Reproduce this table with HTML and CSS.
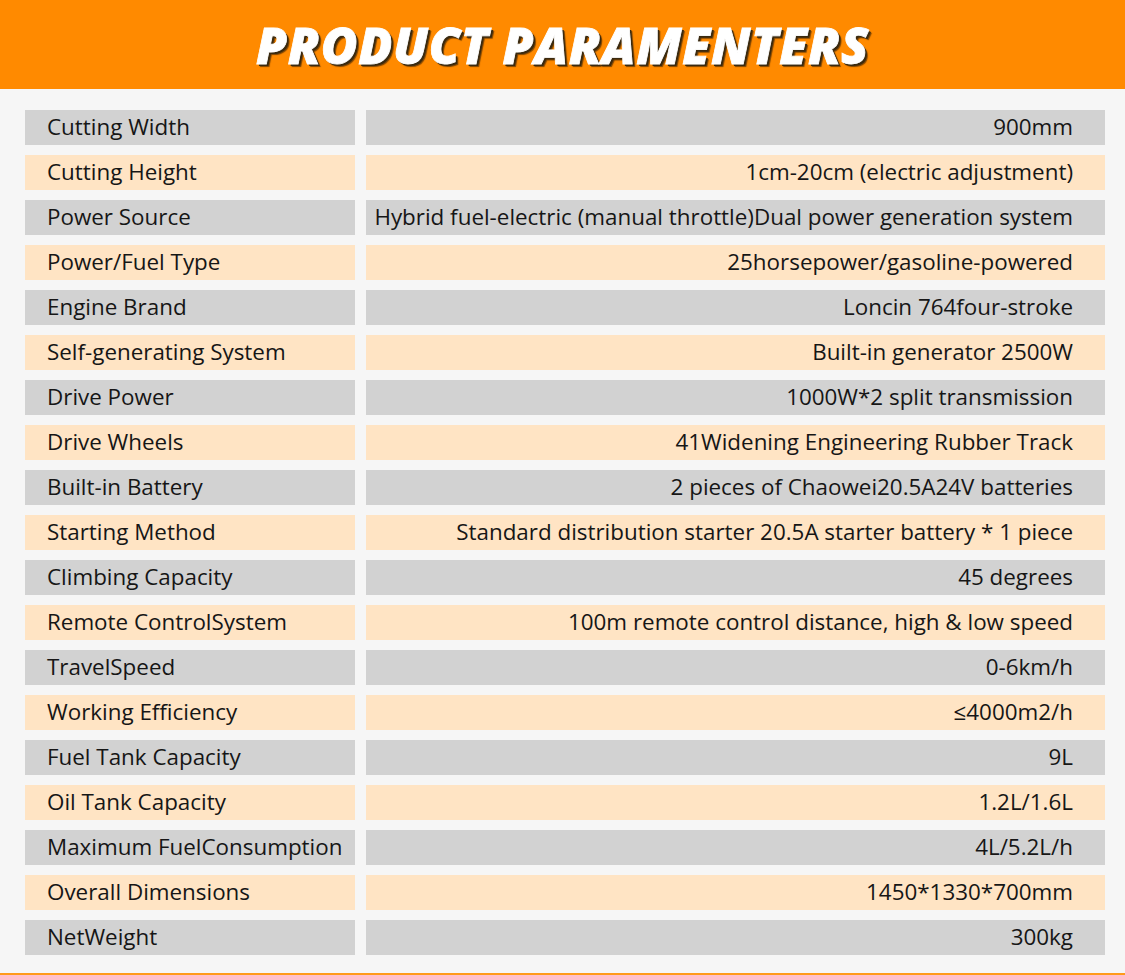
FILE: index.html
```html
<!DOCTYPE html>
<html>
<head>
<meta charset="utf-8">
<link rel="stylesheet" href="styles.css">
</head>
<body>
<header class="banner"><h1 class="title">PRODUCT PARAMENTERS</h1></header>
<main class="table">
  <div class="row gray"><div class="label">Cutting Width</div><div class="value">900mm</div></div>
  <div class="row peach"><div class="label">Cutting Height</div><div class="value">1cm-20cm (electric adjustment)</div></div>
  <div class="row gray"><div class="label">Power Source</div><div class="value">Hybrid fuel-electric (manual throttle)Dual power generation system</div></div>
  <div class="row peach"><div class="label">Power/Fuel Type</div><div class="value">25horsepower/gasoline-powered</div></div>
  <div class="row gray"><div class="label">Engine Brand</div><div class="value">Loncin 764four-stroke</div></div>
  <div class="row peach"><div class="label">Self-generating System</div><div class="value">Built-in generator 2500W</div></div>
  <div class="row gray"><div class="label">Drive Power</div><div class="value">1000W*2 split transmission</div></div>
  <div class="row peach"><div class="label">Drive Wheels</div><div class="value">41Widening Engineering Rubber Track</div></div>
  <div class="row gray"><div class="label">Built-in Battery</div><div class="value">2 pieces of Chaowei20.5A24V batteries</div></div>
  <div class="row peach"><div class="label">Starting Method</div><div class="value">Standard distribution starter 20.5A starter battery * 1 piece</div></div>
  <div class="row gray"><div class="label">Climbing Capacity</div><div class="value">45 degrees</div></div>
  <div class="row peach"><div class="label">Remote ControlSystem</div><div class="value">100m remote control distance, high &amp; low speed</div></div>
  <div class="row gray"><div class="label">TravelSpeed</div><div class="value">0-6km/h</div></div>
  <div class="row peach"><div class="label">Working Efficiency</div><div class="value">≤4000m2/h</div></div>
  <div class="row gray"><div class="label">Fuel Tank Capacity</div><div class="value">9L</div></div>
  <div class="row peach"><div class="label">Oil Tank Capacity</div><div class="value">1.2L/1.6L</div></div>
  <div class="row gray"><div class="label">Maximum FuelConsumption</div><div class="value">4L/5.2L/h</div></div>
  <div class="row peach"><div class="label">Overall Dimensions</div><div class="value">1450*1330*700mm</div></div>
  <div class="row gray"><div class="label">NetWeight</div><div class="value">300kg</div></div>
</main>
<div class="bottom-line"></div>
</body>
</html>
```
FILE: styles.css
```css
html, body {
  margin: 0;
  padding: 0;
}
body {
  width: 1125px;
  height: 975px;
  background: #f6f6f6;
  font-family: "Open Sans", "Noto Sans", sans-serif;
  color: #161616;
  overflow: hidden;
  display: flex;
  flex-direction: column;
}
.banner {
  height: 89px;
  background: #ff8a00;
  display: flex;
  align-items: center;
  justify-content: center;
}
.title {
  margin: 0;
  color: #ffffff;
  font-family: "Open Sans", sans-serif;
  font-weight: 800;
  font-style: italic;
  font-size: 50px;
  letter-spacing: 0.6px;
  text-shadow: 2px 2px 0 #3a2a10, 3px 3px 1px rgba(0,0,0,0.5);
  -webkit-text-stroke: 0.8px #ffffff;
}
.table {
  flex: 1;
  display: flex;
  flex-direction: column;
  gap: 10px;
  padding: 21px 20px 0 25px;
}
.row {
  display: grid;
  grid-template-columns: 330px 739px;
  column-gap: 11px;
  height: 35px;
}
.label, .value {
  display: flex;
  align-items: center;
  font-size: 22.4px;
  white-space: nowrap;
  padding-bottom: 2px;
  box-sizing: border-box;
}
.label {
  padding-left: 22px;
}
.value {
  justify-content: flex-end;
  padding-right: 32px;
}
.gray .label, .gray .value {
  background: #d2d2d2;
}
.peach .label, .peach .value {
  background: #ffe4c4;
}
.bottom-line {
  height: 2px;
  background: #ff9a1a;
}
```
